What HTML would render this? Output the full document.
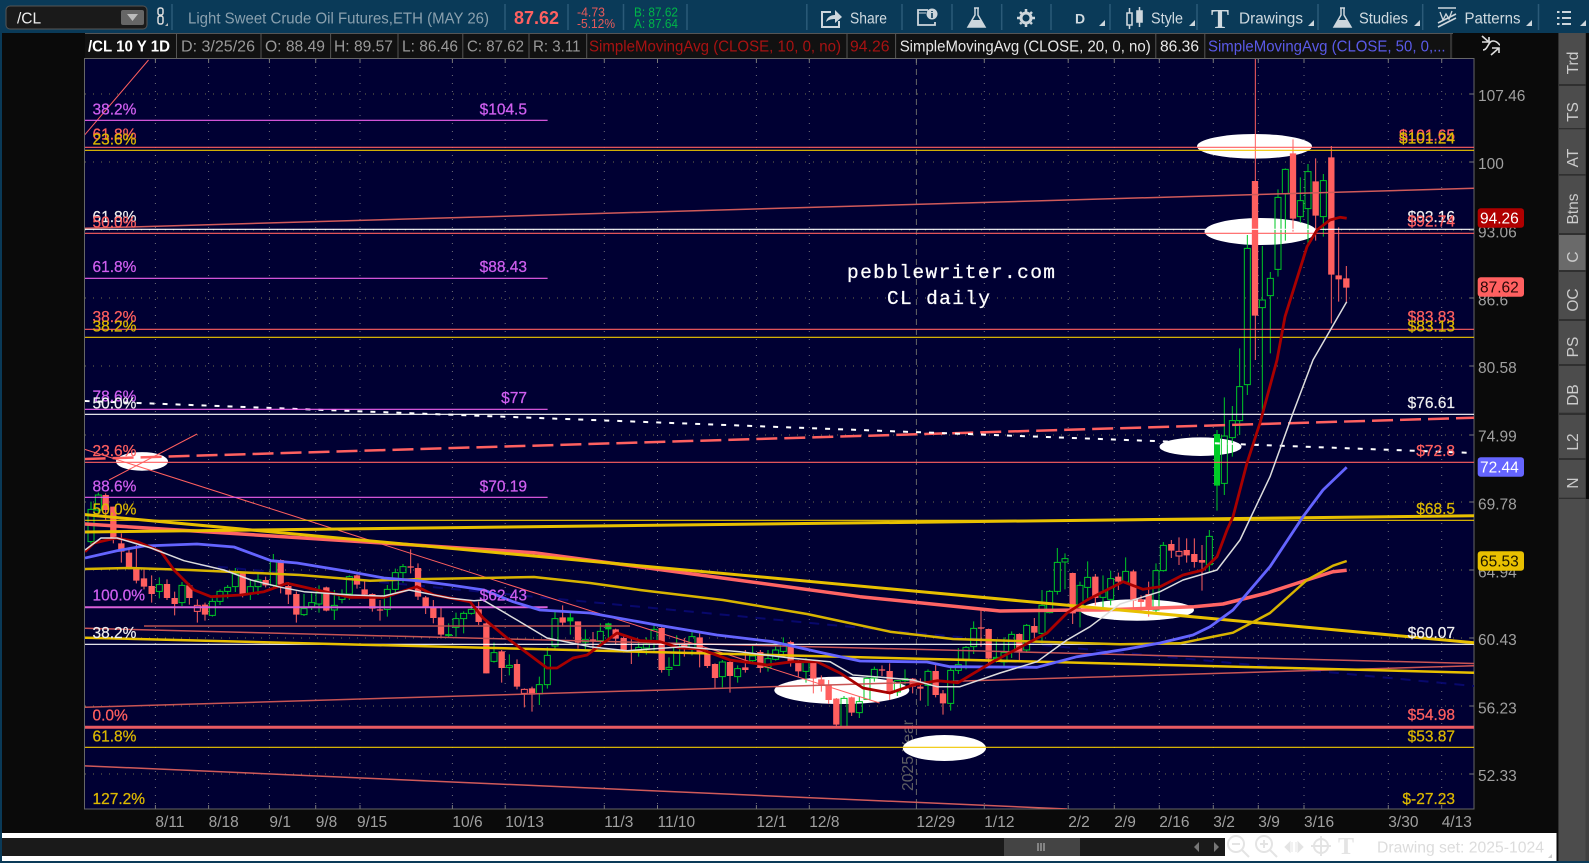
<!DOCTYPE html>
<html><head><meta charset="utf-8"><title>/CL chart</title>
<style>
html,body{margin:0;padding:0;width:1589px;height:863px;overflow:hidden;background:#0a3a58}
svg{display:block}
text{font-family:"Liberation Sans",sans-serif;font-size:15.5px}
.m{fill:#d05ff0;stroke:#d05ff0;stroke-width:.25}.r{fill:#ff5f5f;stroke:#ff5f5f;stroke-width:.25}.y{fill:#dcb800;stroke:#dcb800;stroke-width:.25}.w{fill:#f0f0f0;stroke:#f0f0f0;stroke-width:.2}
.a{fill:#999}.l{fill:#a0a0a0}.t{fill:#d0dae0}
.e{text-anchor:end}
.rw{fill:none;stroke:#ff5f5f;stroke-width:3}
.rb{fill:none;stroke:#ff5f5f;stroke-width:19}
.gw{fill:none;stroke:#00c825;stroke-width:3}
.sep{stroke:#2b5a78;stroke-width:1.5}
.ls{stroke:#555;stroke-width:1}
.tab{fill:#ccc;text-anchor:middle}
</style></head><body>
<svg width="1589" height="863" viewBox="0 0 1589 863" xmlns="http://www.w3.org/2000/svg">
<rect width="1589" height="863" fill="#0a3a58"/>
<rect x="2" y="33" width="1587" height="828" fill="#0a0a0a"/>

<!-- top toolbar -->
<rect x="6" y="6" width="141" height="23" rx="4" fill="#1a1a1a" stroke="#555"/>
<text x="17" y="23.5" fill="#eee">/CL</text>
<rect x="121" y="10" width="23" height="15" rx="2" fill="#666"/>
<path d="M127 14h11l-5.5 7z" fill="#bbb"/>
<rect x="158" y="8" width="5" height="7" rx="2" fill="none" stroke="#ddd" stroke-width="1.5"/>
<rect x="158" y="16" width="5" height="8" rx="2" fill="none" stroke="#ddd" stroke-width="1.5"/>
<path d="M168 26h-3l3-3z" fill="#bbb"/>
<path class="sep" d="M172 4V30M505 4V30M568 4V30M623.5 4V30M687 4V30M806.8 4V30M902 4V30M952 4V30M1001.7 4V30M1051 4V30M1110 4V30M1197 4V30M1318 4V30M1422.7 4V30M1538.5 4V30"/>
<text x="188" y="23.5" fill="#8aa0ae" textLength="301" lengthAdjust="spacingAndGlyphs">Light Sweet Crude Oil Futures,ETH (MAY 26)</text>
<text x="514" y="24" fill="#ff6060" style="font-size:18px;font-weight:bold" textLength="45" lengthAdjust="spacingAndGlyphs">87.62</text>
<text x="577" y="16.5" fill="#e85a5a" style="font-size:12.5px" textLength="28" lengthAdjust="spacingAndGlyphs">-4.73</text>
<text x="577" y="28" fill="#e85a5a" style="font-size:12.5px" textLength="38" lengthAdjust="spacingAndGlyphs">-5.12%</text>
<text x="634" y="16.5" fill="#00b548" style="font-size:12.5px" textLength="44" lengthAdjust="spacingAndGlyphs">B: 87.62</text>
<text x="634" y="28" fill="#00b548" style="font-size:12.5px" textLength="44" lengthAdjust="spacingAndGlyphs">A: 87.64</text>

<!-- toolbar icons -->
<path d="M831 12h-9v15h17v-6" fill="none" stroke="#cdd6dc" stroke-width="2"/>
<path d="M826 22c1-5 5-7 9-7v-5l7 7-7 6v-4c-4 0-7 1-9 3z" fill="#cdd6dc"/>
<text x="850" y="23.5" class="t" textLength="37" lengthAdjust="spacingAndGlyphs">Share</text>
<path d="M928 10h-10v15h17v-3" fill="none" stroke="#cdd6dc" stroke-width="1.8"/><path d="M918 13h8" stroke="#cdd6dc"/>
<circle cx="932" cy="14" r="5.5" fill="#cdd6dc"/><path d="M932 11v1M932 13v5" stroke="#0a3a58" stroke-width="1.6"/>
<path d="M974 8h5M975 8v7l-7 12h17l-7-12V8" fill="none" stroke="#cdd6dc" stroke-width="1.5"/><path d="M972 20h9l4 7h-17z" fill="#cdd6dc"/>
<circle cx="1026" cy="18" r="5" fill="none" stroke="#cdd6dc" stroke-width="3"/>
<path d="M1026 9v18M1017 18h18M1020 12l12 12M1032 12l-12 12" stroke="#cdd6dc" stroke-width="2.5" stroke-dasharray="3 12"/>
<text x="1075" y="23.5" style="font-weight:bold;font-size:14px" class="t">D</text>
<path d="M1127 13h5v12h-5zM1137 11h5v11h-5z" fill="none" stroke="#cdd6dc" stroke-width="1.6"/><path d="M1137 11h5v11h-5z" fill="#cdd6dc"/>
<path d="M1129.5 8v5M1129.5 25v4M1139.5 7v4M1139.5 22v5" stroke="#cdd6dc" stroke-width="1.5"/>
<text x="1151" y="23.5" class="t" textLength="32" lengthAdjust="spacingAndGlyphs">Style</text>
<text x="1211" y="28" class="t" style="font-family:'Liberation Serif',serif;font-size:27px;font-weight:bold">T</text>
<text x="1239" y="23.5" class="t" textLength="64" lengthAdjust="spacingAndGlyphs">Drawings</text>
<path d="M1340 8h5M1341 8v7l-7 12h17l-7-12V8" fill="none" stroke="#cdd6dc" stroke-width="1.5"/><path d="M1338 20h9l4 7h-17z" fill="#cdd6dc"/>
<text x="1359" y="23.5" class="t" textLength="49" lengthAdjust="spacingAndGlyphs">Studies</text>
<path d="M1438 8h18M1438 23l18-9M1438 27l18-9" stroke="#cdd6dc" stroke-width="1.6" fill="none"/><path d="M1440 12l3 8 3-6 3 5 3-8" fill="none" stroke="#cdd6dc" stroke-width="1.3"/>
<text x="1464.5" y="23.5" class="t" textLength="56" lengthAdjust="spacingAndGlyphs">Patterns</text>
<path d="M1557 12h2.5M1557 18h2.5M1557 24h2.5M1562 12h9M1562 18h9M1562 24h9" stroke="#cdd6dc" stroke-width="2"/>
<path d="M1105 26h-6l6-6zM1195 26h-6l6-6zM1314 26h-6l6-6zM1420 26h-6l6-6zM1532 26h-6l6-6zM1586 26h-6l6-6z" fill="#cdd6dc"/>

<!-- legend row -->
<rect x="85" y="33" width="1368" height="26" fill="#111"/>
<path class="ls" d="M85 33.5H1453M176.5 33V59M261 33V59M330.6 33V59M398 33V59M462.8 33V59M529 33V59M586.7 33V59M847 33V59M895.6 33V59M1155.8 33V59M1204.8 33V59M1451 33V59"/>
<text x="88" y="51.5" fill="#fff" style="font-weight:bold" textLength="82" lengthAdjust="spacingAndGlyphs">/CL 10 Y 1D</text>
<text x="181" y="51.5" class="a" textLength="74" lengthAdjust="spacingAndGlyphs">D: 3/25/26</text>
<text x="265" y="51.5" class="a" textLength="60" lengthAdjust="spacingAndGlyphs">O: 88.49</text>
<text x="334" y="51.5" class="a" textLength="59" lengthAdjust="spacingAndGlyphs">H: 89.57</text>
<text x="402" y="51.5" class="a" textLength="56" lengthAdjust="spacingAndGlyphs">L: 86.46</text>
<text x="467" y="51.5" class="a" textLength="57" lengthAdjust="spacingAndGlyphs">C: 87.62</text>
<text x="533" y="51.5" class="a" textLength="47.5" lengthAdjust="spacingAndGlyphs">R: 3.11</text>
<text x="589" y="51.5" fill="#a81212" textLength="252" lengthAdjust="spacingAndGlyphs">SimpleMovingAvg (CLOSE, 10, 0, no)</text>
<text x="850" y="51.5" fill="#a81212" textLength="39.5" lengthAdjust="spacingAndGlyphs">94.26</text>
<text x="899.7" y="51.5" fill="#e8e8e8" textLength="251" lengthAdjust="spacingAndGlyphs">SimpleMovingAvg (CLOSE, 20, 0, no)</text>
<text x="1160" y="51.5" fill="#e8e8e8" textLength="39" lengthAdjust="spacingAndGlyphs">86.36</text>
<text x="1208" y="51.5" fill="#5a5ae8" textLength="237.6" lengthAdjust="spacingAndGlyphs">SimpleMovingAvg (CLOSE, 50, 0,...</text>
<path d="M1482 37l8 7M1482 43h7v-5M1483 51c5 0 5-9 10-9s6 4 7 4M1491 56l8-7M1492 49h7v5" fill="none" stroke="#ddd" stroke-width="1.6" transform="translate(0 -1)"/>

<!-- chart -->
<rect x="84.5" y="58.5" width="1389.5" height="750.5" fill="#000033" stroke="#666"/>
<clipPath id="c"><rect x="85" y="59" width="1389" height="750"/></clipPath>
<g clip-path="url(#c)">
<!-- grid -->
<path d="M85 94H1474M85 162H1474M85 230H1474M85 298H1474M85 366H1474M85 435H1474M85 502H1474M85 570H1474M85 638H1474M85 706H1474M85 774H1474" stroke="#6e6e48" stroke-width="1" stroke-dasharray="1 7" fill="none"/>
<path d="M155.4 59V809M208.6 59V809M269.4 59V809M315.7 59V809M360 59V809M452.4 59V809M505.2 59V809M604.3 59V809M657.5 59V809M756.4 59V809M809.3 59V809M984.3 59V809M1068.2 59V809M1114.3 59V809M1159.3 59V809M1213.3 59V809M1258.3 59V809M1304 59V809M1388.3 59V809M1441.7 59V809" stroke="#70707a" stroke-width="1" stroke-dasharray="1 7" fill="none"/>
<path d="M916.4 59V809" stroke="#666" stroke-width="1" stroke-dasharray="6 4"/>
<text transform="translate(913 791) rotate(-90)" fill="#5d5d62" style="font-size:16px" textLength="71" lengthAdjust="spacingAndGlyphs">2025 Year</text>
<path d="M200 565L1474 686" stroke="#08086c" stroke-width="2" stroke-dasharray="10 8" fill="none"/>

<!-- ellipses -->
<g fill="#fff">
<ellipse cx="1254.5" cy="146.3" rx="57.5" ry="12.3"/>
<ellipse cx="1260.5" cy="231.5" rx="56" ry="13.5"/>
<ellipse cx="1200.5" cy="446.7" rx="41" ry="9.3"/>
<ellipse cx="142" cy="461.4" rx="26" ry="9.3"/>
<ellipse cx="1137" cy="610" rx="57" ry="10.7"/>
<ellipse cx="841.8" cy="690.3" rx="67.5" ry="13.7"/>
<ellipse cx="944.4" cy="748" rx="41.6" ry="13"/>
</g>

<!-- candles A -->
<g transform="translate(84 490) scale(.33333)">
<path class="rw" d="M65 10V90M88 50V160M112 130V218M135 175V238M157 165V280M180 235V298M203 256V338M249 268V330M272 305V376M316 280V344M340 328V346M340 364V398M363 338V392M476 248V322M545 260V292M590 208V310M613 276V342M637 304V398M727 290V364M819 254V296M842 272V326M865 310V365M888 330V392M980 178V250M1002 220V330M1025 318V372M1048 330V400M1071 350V445M1184 335V405"/>
<path class="rb" d="M65 15V60M88 50V145M112 160V185M135 188V235M157 232V272M180 265V290M203 288V312M249 282V324M272 324V342M316 286V324M363 344V374M476 250V314M545 270V286M590 210V284M613 288V314M637 312V374M727 292V362M819 256V284M842 298V314M865 312V356M888 358V362M980 229V233M1002 234V320M1025 322V352M1048 354V384M1071 382V434M1184 358V396"/>
<path class="rw" d="M331 346h18v18h-18z"/>
<path class="gw" d="M21 35V58M21 155V170M43 8V15M43 60V70M226 262V284M226 304V325M294 276V286M294 338V348M385 325V334M385 376V380M408 298V304M408 334V345M431 285V292M431 304V325M454 234V250M454 290V306M499 272V290M499 310V330M522 252V270M522 290V315M568 192V214M568 286V295M660 312V356M660 374V378M683 310V338M683 350V360M705 286V306M705 342V368M751 300V346M751 360V390M774 298V312M774 328V340M796 256V260M796 312V330M910 285V298M910 358V380M934 236V248M934 298V308M957 222V230M957 248V278M1094 400V442M1116 368V386M1116 412V440M1139 364V370M1139 386V430M1162 335V358M1162 370V374"/>
<path class="gw" d="M12 58h18v97h-18zM34 15h18v45h-18zM217 284h18v20h-18zM285 286h18v52h-18zM376 334h18v42h-18zM399 304h18v30h-18zM422 292h18v12h-18zM445 250h18v40h-18zM490 290h18v20h-18zM513 270h18v20h-18zM559 214h18v72h-18zM651 356h18v18h-18zM674 338h18v12h-18zM696 306h18v36h-18zM742 346h18v14h-18zM765 312h18v16h-18zM787 260h18v52h-18zM901 298h18v60h-18zM925 248h18v50h-18zM948 230h18v18h-18zM1085 434h18v2h-18zM1107 386h18v26h-18zM1130 370h18v16h-18zM1153 358h18v12h-18z"/>
</g>

<!-- candles B -->
<g transform="translate(440 590) scale(.33333)">
<path class="rw" d="M139 88V250M185 180V278M231 208V298M253 295V298M253 310V352M276 290V365M368 46V110M414 94V176M459 126V178M527 116V164M551 140V188M574 142V222M665 112V248M733 144V200M779 130V232M802 180V234M825 220V296M870 212V308M916 180V248M961 180V248M1052 152V230M1075 210V260M1120 214V310M1144 256V305M1166 270V342M1189 324V410M1235 320V378M1326 226V258"/>
<path class="rb" d="M139 100V250M185 184V234M231 222V290M276 295V314M368 82V98M414 94V158M459 148V152M527 118V146M551 144V184M574 180V186M665 114V240M733 165V174M779 142V192M802 192V228M825 222V264M870 216V258M916 232V240M961 186V234M1052 156V218M1075 218V244M1120 218V266M1144 268V288M1166 286V330M1189 326V404M1235 322V368M1326 238V242"/>
<path class="rw" d="M244 298h18v12h-18z"/>
<path class="rb" style="stroke:#00c825" d="M391 82V94M505 100V118"/>
<path class="gw" d="M162 158V188M162 214V218M208 193V226M208 232V256M298 260V284M298 312V345M322 172V196M322 284V296M345 62V86M345 168V178M391 68V134M436 118V148M436 156V178M481 100V124M481 152V174M505 98V146M596 152V172M596 184V200M619 142V162M619 174V194M642 106V118M642 158V182M687 202V232M687 238V258M710 136V162M756 124V140M756 178V196M847 210V216M847 260V292M893 226V236M893 260V278M938 168V198M938 212V220M984 180V206M984 232V245M1007 170V180M1007 208V212M1030 142V160M1030 184V196M1098 204V214M1098 244V278M1212 318V325M1258 318V335M1258 368V384M1281 256V265M1281 328V330M1303 230V238M1303 264V275"/>
<path class="gw" d="M153 188h18v26h-18zM199 226h18v6h-18zM289 284h18v28h-18zM313 196h18v88h-18zM336 86h18v82h-18zM427 148h18v8h-18zM472 124h18v28h-18zM587 172h18v12h-18zM610 162h18v12h-18zM633 118h18v40h-18zM678 232h18v6h-18zM701 162h18v64h-18zM747 140h18v38h-18zM838 216h18v44h-18zM884 236h18v24h-18zM929 198h18v14h-18zM975 206h18v26h-18zM998 180h18v28h-18zM1021 160h18v24h-18zM1089 214h18v30h-18zM1203 325h18v85h-18zM1249 335h18v33h-18zM1272 265h18v63h-18zM1294 238h18v26h-18z"/>
</g>

<!-- candles C -->
<g transform="translate(860 530) scale(.33333)">
<path class="rw" d="M89 400V510M158 444V490M181 445V512M227 405V502M249 480V554M363 240V350M386 296V402M478 310V390M523 264V330M638 128V282M706 132V226M775 128V180M820 120V238M843 196V245M866 155V260M934 30V84M957 22V64M957 78V105M980 25V98M1003 25V113M1026 45V182"/>
<path class="rb" d="M89 423V492M158 446V470M181 470V476M227 423V495M249 490V520M363 292V296M386 297V386M478 312V364M523 288V308M638 129V250M706 140V204M775 140V155M820 124V212M843 208V216M866 192V240M934 42V62M980 60V76M1003 72V96M1026 90V98"/>
<path class="rw" d="M948 64h18v14h-18z"/>
<path class="gw" d="M112 450V452M112 486V498M135 418V446M135 452V464M204 418V424M204 466V528M272 408V421M272 520V542M295 354V404M295 421V432M318 348V352M318 392V418M341 274V295M341 350V372M409 330V398M432 322V368M432 396V410M455 304V313M455 366V384M500 282V286M500 360V368M546 180V226M546 310V340M569 180V184M569 248V250M592 54V97M592 184V194M615 70V86M615 96V178M660 155V166M660 232V292M683 94V142M683 172V204M729 136V186M729 202V232M752 122V146M752 208V226M797 82V124M797 156V158M888 100V122M888 240V246M910 36V46M910 122V125M1048 0V19M1048 104V125"/>
<path class="gw" d="M103 452h18v34h-18zM126 446h18v6h-18zM195 424h18v42h-18zM263 421h18v99h-18zM286 404h18v17h-18zM309 352h18v40h-18zM332 295h18v55h-18zM400 382h18v4h-18zM423 368h18v28h-18zM446 313h18v53h-18zM491 286h18v74h-18zM537 226h18v84h-18zM560 184h18v64h-18zM583 97h18v87h-18zM606 86h18v10h-18zM651 166h18v66h-18zM674 142h18v30h-18zM720 186h18v16h-18zM743 146h18v62h-18zM788 124h18v32h-18zM879 122h18v118h-18zM901 46h18v76h-18zM1039 19h18v85h-18z"/>
</g>

<!-- candles D -->
<g transform="translate(1100 60) scale(.33333)">
<path class="rw" d="M466 -6V900M579 238V515M647 295V542M694 258V790M716 502V725M739 618V725"/>
<path class="rb" d="M465 363V767M579 280V476M647 364V467M694 292V644M716 646V658M739 655V683"/>
<path fill="#00cc28" d="M342 1122h18v155h-18z"/>
<path class="gw" d="M351 1110V1352M373 1012V1128M373 1270V1305M397 1038V1082M397 1133V1190M419 865V980M419 1082V1125M442 525V565M442 974V1005M487 558V720M487 743V1060M511 636V655M511 707V880M534 388V412M534 628V650M556 325V328M556 402V542M601 352V422M601 470V488M624 312V335M624 446V552M670 342V362M670 470V530"/>
<path class="gw" d="M364 1128h18v142h-18zM388 1082h18v51h-18zM410 980h18v102h-18zM433 565h18v409h-18zM478 720h18v23h-18zM502 655h18v52h-18zM525 412h18v216h-18zM547 328h18v74h-18zM592 422h18v48h-18zM615 335h18v111h-18zM661 362h18v108h-18z"/>
</g>

<!-- trend lines -->
<g fill="none" stroke="#ff5f5f" stroke-width="1">
<path d="M84.6 135L148.5 60"/>
<path d="M109 480L197 434"/>
<path d="M84.6 449.3L879.6 703"/>
<path d="M84.6 228.3L1474 188.3" stroke-width="1.5" stroke="#d05a5a"/>
<path d="M84.6 707.3L1474 665.7" stroke-width="1.5" stroke="#c85454"/>
<path d="M84.6 628.3L1474 663.5" stroke-width="1.5" stroke="#c85454"/>
<path d="M144 626H630" stroke-width="1.5" stroke="#b85050"/>
<path d="M84.6 765.8L1067 809" stroke-width="1.5" stroke="#d05a5a"/>
</g>
<path d="M84.6 459L1474 417.7" stroke="#ff6060" stroke-width="2.5" stroke-dasharray="21 7" fill="none"/>
<path d="M84.6 401L1474 453" stroke="#fff" stroke-width="2" stroke-dasharray="5 8" fill="none"/>

<!-- horizontal fib lines -->
<g fill="none" stroke-width="1.2">
<path stroke="#ee60ee" d="M85 120.3H547.6M85 278.3H547.6M85 409.3H547.6M85 497.3H547.6"/>
<path stroke="#d860d8" stroke-width="2" d="M85 607.3H547.6"/>
<path stroke="#ff6060" d="M85 147.3H1474M85 233.3H1474M85 329.3H1474M85 462.3H1474"/>
<path stroke="#f0c800" d="M85 150.3H1474M85 337.3H1474M85 520.3H1474M85 747.3H1474"/>
<path stroke="#fff" d="M85 229.3H1474M85 414.3H1474M85 644.3H1474"/>
<path stroke="#e85a62" stroke-width="3" d="M85 727.3H1474"/>
</g>

<!-- MA / thick lines -->
<g fill="none" stroke-linejoin="round">
<path stroke="#ff6464" stroke-width="3.5" d="M84.6 524L534 552.7L700 575L860 596.7L1000 611L1080 610L1100 610L1194 606.7L1223 604L1267 593L1307 580L1333 571.7L1346.7 570.3"/>
<path stroke="#e8c000" stroke-width="3" d="M84.6 532L1474 515.7"/>
<path stroke="#e8c000" stroke-width="3" d="M84.6 514.6L1474 642.7"/>
<path stroke="#e8c000" stroke-width="2.5" d="M84.6 637.7L1474 672.7"/>
<path stroke="#d8b400" stroke-width="2.5" d="M85 569L130 568L190 570L300 575L370 580.7L414 579.3L534 577L590 583L640 590L723 600L807 614L890 631.7L953 639L1120 644.3L1180 643.3L1233 632.7L1270 613L1307 580L1333 565.7L1346.7 561"/>
<path stroke="#6464ff" stroke-width="2.8" d="M85 558L117 550.7L144 546L197 544L234 547L271 560.7L297 563L350 571.7L384 578L417 580.7L450 585L484 590L513 601.7L540 610L590 613L657 625L717 635L773 641.7L823 653L860 661L927 662L950 666.7L1037 667.3L1077 656.7L1127 649L1160 643L1193 635L1210 626.7L1233 610L1270 566.7L1303 516.7L1323 490L1346.7 467.3"/>
<path stroke="#a80000" stroke-width="2.8" d="M85 551.7L94 543L116 538L137 541.7L161 551.7L174 570L194 590L211 596.7L241 595L264 591.7L287 583.3L317 590L350 597.3L384 597.3L417 586.7L434 595L470 601.7L483 618L507 638L527 653L547 668L557 668L573 658L587 655L617 633L640 640.7L660 641.7L680 648L700 649L730 660L767 665L793 661.7L817 661.7L840 673L863 688L890 693L913 685L937 680.7L958 682.7L993 661.7L1047 633L1067 613L1087 600L1123 581.7L1143 589.3L1160 586.7L1183 575L1203 570L1217 556.7L1227 530L1233 516.7L1247 463L1260 423L1277 360L1285 316.7L1307 246.7L1317 230L1330 220L1340 217.3L1346.7 218.3"/>
<path stroke="#dddddd" stroke-width="1.5" d="M85 550L101 538L117 538L151 548L184 560.7L224 570L251 580L281 587.3L304 591.7L351 595L384 596L409 590L451 598.3L474 600.7L483 600L517 620L547 638L590 646.7L627 650.7L683 646.7L740 651.7L790 658L830 661.7L853 675L890 678L913 680L937 686.7L960 686.7L1000 673L1037 661.7L1067 640L1090 626.7L1120 604L1160 591.7L1183 580L1217 570L1240 540L1270 476.7L1293 413L1313 360L1346.7 301.7"/>
</g>

<!-- chart labels -->
<g>
<text x="92.5" y="114.5" class="m">38.2%</text>
<text x="92.5" y="139.5" class="r">61.8%</text>
<text x="92.5" y="144.5" class="y">23.6%</text>
<text x="92.5" y="222" class="w">61.8%</text>
<text x="92.5" y="227.5" class="r">50.0%</text>
<text x="92.5" y="272" class="m">61.8%</text>
<text x="92.5" y="322" class="r">38.2%</text>
<text x="92.5" y="331.5" class="y">38.2%</text>
<text x="92.5" y="401.5" class="m">78.6%</text>
<text x="92.5" y="408.5" class="w">50.0%</text>
<text x="92.5" y="456" class="r">23.6%</text>
<text x="92.5" y="491.5" class="m">88.6%</text>
<text x="92.5" y="514.5" class="y">50.0%</text>
<text x="92.5" y="600.5" class="m">100.0%</text>
<text x="92.5" y="638" class="w">38.2%</text>
<text x="92.5" y="720.5" class="r">0.0%</text>
<text x="92.5" y="741.5" class="y">61.8%</text>
<text x="92.5" y="804" class="y">127.2%</text>
<text x="527" y="114.5" class="m e">$104.5</text>
<text x="527" y="272" class="m e">$88.43</text>
<text x="527" y="403" class="m e">$77</text>
<text x="527" y="491.5" class="m e">$70.19</text>
<text x="527" y="600.5" class="m e">$62.43</text>
<text x="1455" y="140.5" class="r e">$101.65</text>
<text x="1455" y="143.5" class="y e">$101.24</text>
<text x="1455" y="222" class="w e">$93.16</text>
<text x="1455" y="226.5" class="r e">$92.74</text>
<text x="1455" y="322" class="r e">$83.83</text>
<text x="1455" y="331.5" class="y e">$83.13</text>
<text x="1455" y="408" class="w e">$76.61</text>
<text x="1455" y="456" class="r e">$72.8</text>
<text x="1455" y="514" class="y e">$68.5</text>
<text x="1455" y="638" class="w e">$60.07</text>
<text x="1455" y="720" class="r e">$54.98</text>
<text x="1455" y="741.5" class="y e">$53.87</text>
<text x="1455" y="804" class="y e">$-27.23</text>
<text x="847" y="278" fill="#fff" stroke="#fff" stroke-width=".25" style="font-family:'Liberation Mono',monospace;font-size:19.5px" textLength="208" lengthAdjust="spacing">pebblewriter.com</text>
<text x="887" y="304" fill="#fff" stroke="#fff" stroke-width=".25" style="font-family:'Liberation Mono',monospace;font-size:19.5px" textLength="103" lengthAdjust="spacing">CL daily</text>
</g>
</g>

<!-- ticks -->
<path stroke="#777" stroke-width="1" d="M155.4 59v4M208.6 59v4M269.4 59v4M315.7 59v4M360 59v4M452.4 59v4M505.2 59v4M604.3 59v4M657.5 59v4M756.4 59v4M809.3 59v4M916.4 59v4M984.3 59v4M1068.2 59v4M1114.3 59v4M1159.3 59v4M1213.3 59v4M1258.3 59v4M1304 59v4M1388.3 59v4M1441.7 59v4M155.4 805v4M208.6 805v4M269.4 805v4M315.7 805v4M360 805v4M452.4 805v4M505.2 805v4M604.3 805v4M657.5 805v4M756.4 805v4M809.3 805v4M916.4 805v4M984.3 805v4M1068.2 805v4M1114.3 805v4M1159.3 805v4M1213.3 805v4M1258.3 805v4M1304 805v4M1388.3 805v4M1441.7 805v4M1470 94h4M1470 162h4M1470 230h4M1470 298h4M1470 366h4M1470 435h4M1470 502h4M1470 570h4M1470 638h4M1470 706h4M1470 774h4"/>

<!-- y axis -->
<g class="l">
<text x="1478" y="101">107.46</text>
<text x="1478" y="169">100</text>
<text x="1478" y="237.5">93.06</text>
<text x="1478" y="305.5">86.6</text>
<text x="1478" y="373">80.58</text>
<text x="1478" y="441.5">74.99</text>
<text x="1478" y="509.5">69.78</text>
<text x="1478" y="577.5">64.94</text>
<text x="1478" y="645">60.43</text>
<text x="1478" y="713.5">56.23</text>
<text x="1478" y="781">52.33</text>
</g>
<rect x="1477.7" y="208.3" width="46.3" height="19.4" rx="3" fill="#b00000"/>
<text x="1480" y="223.5" fill="#fff">94.26</text>
<rect x="1477.7" y="277.3" width="46.3" height="19.4" rx="3" fill="#ff6060"/>
<text x="1480" y="292.5" fill="#2a0808">87.62</text>
<rect x="1477.7" y="457.3" width="46.3" height="19.4" rx="3" fill="#6565ff"/>
<text x="1480" y="472.5" fill="#fff">72.44</text>
<rect x="1477.7" y="551.3" width="46.3" height="19.4" rx="3" fill="#e8c000"/>
<text x="1480" y="566.5" fill="#1a1500">65.53</text>

<!-- x axis -->
<g class="l">
<text x="155.4" y="827">8/11</text><text x="208.6" y="827">8/18</text><text x="269.4" y="827">9/1</text><text x="315.7" y="827">9/8</text><text x="357" y="827">9/15</text><text x="452.4" y="827">10/6</text><text x="505.2" y="827">10/13</text><text x="604.3" y="827">11/3</text><text x="657.5" y="827">11/10</text><text x="756.4" y="827">12/1</text><text x="809.3" y="827">12/8</text><text x="916.4" y="827">12/29</text><text x="984.3" y="827">1/12</text><text x="1068.2" y="827">2/2</text><text x="1114.3" y="827">2/9</text><text x="1159.3" y="827">2/16</text><text x="1213.3" y="827">3/2</text><text x="1258.3" y="827">3/9</text><text x="1304" y="827">3/16</text><text x="1388.3" y="827">3/30</text><text x="1441.7" y="827">4/13</text>
</g>

<!-- bottom strip -->
<rect x="2" y="833" width="1554.5" height="28" fill="#fff"/>
<rect x="2" y="838" width="1223" height="18" fill="#1a1a1a"/>
<rect x="1004" y="838" width="76" height="18" fill="#444"/>
<path d="M1038 843v8M1041 843v8M1044 843v8" stroke="#999" stroke-width="1.5"/>
<path d="M1199 842v10l-5-5zM1214 842v10l5-5z" fill="#777"/>
<g fill="none" stroke="#e4e4e4" stroke-width="2">
<circle cx="1236" cy="844" r="8"/><path d="M1242 850l7 7M1232 844h8"/>
<circle cx="1264" cy="844" r="8"/><path d="M1270 850l7 7M1260 844h8M1264 840v8"/>
<circle cx="1321" cy="846" r="7"/><path d="M1321 836v20M1311 846h20"/>
</g>
<path d="M1285 847l5-5v10zM1303 847l-5-5v10zM1292 842v10M1296 842v10" fill="#e4e4e4" stroke="#e4e4e4"/>
<text x="1338" y="854" fill="#e4e4e4" style="font-family:'Liberation Serif',serif;font-size:24px;font-weight:bold">T</text>
<text x="1377" y="852.5" fill="#dcdcdc" textLength="167" lengthAdjust="spacingAndGlyphs">Drawing set: 2025-1024</text>
<path d="M1552 858h-4l4-4z" fill="#ccc"/>

<!-- right sidebar -->
<rect x="1558" y="33" width="28" height="828" fill="#303030"/>
<rect x="1585.5" y="499" width="3.5" height="362" fill="#404040"/>
<g fill="#4c4c4c">
<rect x="1559" y="33" width="26.5" height="51"/>
<rect x="1559" y="86" width="26.5" height="42"/>
<rect x="1559" y="129.3" width="26.5" height="44.7"/>
<rect x="1559" y="175.7" width="26.5" height="57.3"/>
<rect x="1559" y="235" width="26.5" height="35" fill="#6a6a6a"/>
<rect x="1559" y="272" width="26.5" height="47"/>
<rect x="1559" y="321" width="26.5" height="43"/>
<rect x="1559" y="366" width="26.5" height="46.7"/>
<rect x="1559" y="415" width="26.5" height="43"/>
<rect x="1559" y="460" width="26.5" height="37.7"/>
<rect x="1559" y="499" width="26.5" height="362"/>
</g>
<text class="tab" transform="translate(1578 63) rotate(-90)">Trd</text>
<text class="tab" transform="translate(1578 112) rotate(-90)">TS</text>
<text class="tab" transform="translate(1578 158) rotate(-90)">AT</text>
<text class="tab" transform="translate(1578 209) rotate(-90)">Btns</text>
<text class="tab" transform="translate(1578 257) rotate(-90)">C</text>
<text class="tab" transform="translate(1578 300) rotate(-90)">OC</text>
<text class="tab" transform="translate(1578 347) rotate(-90)">PS</text>
<text class="tab" transform="translate(1578 395) rotate(-90)">DB</text>
<text class="tab" transform="translate(1578 442) rotate(-90)">L2</text>
<text class="tab" transform="translate(1578 483) rotate(-90)">N</text>
</svg>
</body></html>
